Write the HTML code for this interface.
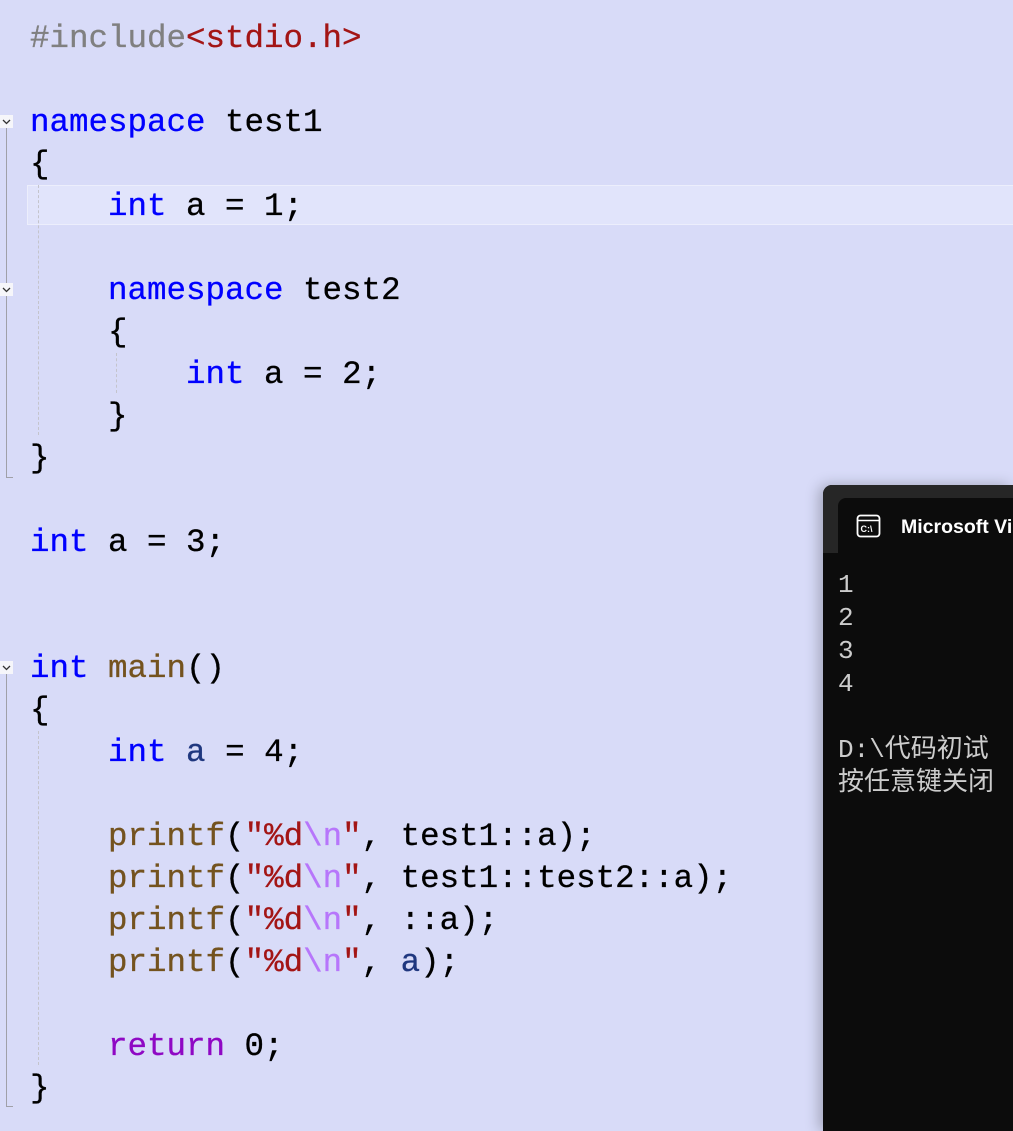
<!DOCTYPE html>
<html><head><meta charset="utf-8"><style>
html,body{margin:0;width:1013px;height:1131px;overflow:hidden}
body{background:#d8dbf8;position:relative;font-family:"Liberation Mono","DejaVu Sans Mono",monospace}
.code{position:absolute;left:30px;top:18px;font-size:32.5px;line-height:42px;white-space:pre;color:#000;-webkit-text-stroke:0.3px currentColor}
.k{color:#0000ff}.p{color:#808080}.s{color:#a31515}.f{color:#74531f}.v{color:#1f377f}.r{color:#8f08c4}.e{color:#b776fb}
.hl{position:absolute;left:27px;top:185px;width:986px;height:40px;background:#e1e4fb;border:1px solid #eceefc;border-right:none;box-sizing:border-box}
.fold{position:absolute;left:0;width:13px;height:13px;background:#f6f6fa}
.vl{position:absolute;left:6px;width:1px;background:#a0a0a8}
.hk{position:absolute;left:6px;width:7px;height:1px;background:#a0a0a8}
.dl{position:absolute;width:0;border-left:1px dashed #c4c4cc}
.con{position:absolute;left:823px;top:485px;width:190px;height:646px;background:#0c0c0c;border-radius:9px 0 0 0;box-shadow:-4px 0 14px rgba(0,0,0,.25);overflow:hidden}
.tb{position:absolute;left:0;top:0;width:190px;height:68px;background:#262626}
.tab{position:absolute;left:15px;top:13px;width:175px;height:55px;background:#0c0c0c;border-radius:8px 0 0 0}
.tt{position:absolute;left:78px;top:31px;color:#fff;font-family:"Liberation Sans",sans-serif;font-size:19.5px;font-weight:bold;white-space:nowrap}
.ct{position:absolute;left:15px;top:84px;color:#cccccc;font-size:26px;line-height:33px;white-space:pre;font-family:"Liberation Mono","Noto Sans CJK SC",monospace}
</style></head><body>
<div class="hl"></div>
<div class="vl" style="top:128px;height:350px"></div><div class="hk" style="top:477px"></div>
<div class="vl" style="top:673px;height:434px"></div><div class="hk" style="top:1106px"></div>
<svg class="fold" style="top:115px" viewBox="0 0 13 13"><path d="M3 5 L6.5 8.5 L10 5" fill="none" stroke="#333" stroke-width="1.3"/></svg>
<svg class="fold" style="top:283px" viewBox="0 0 13 13"><path d="M3 5 L6.5 8.5 L10 5" fill="none" stroke="#333" stroke-width="1.3"/></svg>
<svg class="fold" style="top:661px" viewBox="0 0 13 13"><path d="M3 5 L6.5 8.5 L10 5" fill="none" stroke="#333" stroke-width="1.3"/></svg>
<div class="dl" style="left:38px;top:185px;height:250px"></div>
<div class="dl" style="left:116px;top:353px;height:40px"></div>
<div class="dl" style="left:38px;top:731px;height:334px"></div>
<div class="code"><span class="p">#include</span><span class="s">&lt;stdio.h&gt;</span>

<span class="k">namespace</span> test1
{
    <span class="k">int</span> a = 1;

    <span class="k">namespace</span> test2
    {
        <span class="k">int</span> a = 2;
    }
}

<span class="k">int</span> a = 3;


<span class="k">int</span> <span class="f">main</span>()
{
    <span class="k">int</span> <span class="v">a</span> = 4;

    <span class="f">printf</span>(<span class="s">"%d</span><span class="e">\n</span><span class="s">"</span>, test1::a);
    <span class="f">printf</span>(<span class="s">"%d</span><span class="e">\n</span><span class="s">"</span>, test1::test2::a);
    <span class="f">printf</span>(<span class="s">"%d</span><span class="e">\n</span><span class="s">"</span>, ::a);
    <span class="f">printf</span>(<span class="s">"%d</span><span class="e">\n</span><span class="s">"</span>, <span class="v">a</span>);

    <span class="r">return</span> 0;
}</div>
<div class="con">
<div class="tb"></div><div class="tab"></div>
<svg style="position:absolute;left:33px;top:29px" width="25" height="25" viewBox="0 0 25 25"><rect x="1.5" y="1.5" width="22" height="21" rx="3" fill="none" stroke="#fff" stroke-width="1.8"/><line x1="1.5" y1="6.5" x2="23.5" y2="6.5" stroke="#fff" stroke-width="1.5"/><text x="4.5" y="18" font-size="9" font-weight="bold" fill="#fff" font-family="Liberation Sans">C:\</text></svg>
<div class="tt">Microsoft Visual Studio</div>
<div class="ct">1
2
3
4

D:\代码初试
按任意键关闭</div>
</div>
</body></html>
